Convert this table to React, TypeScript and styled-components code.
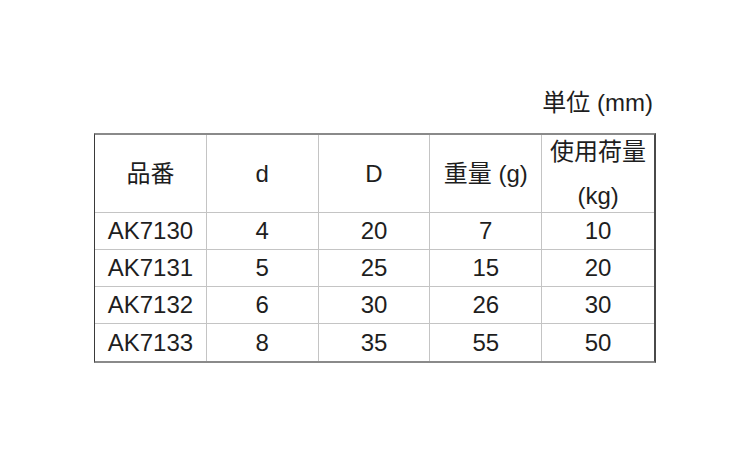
import React from 'react';
import styled, { createGlobalStyle } from 'styled-components';

const GlobalStyle = createGlobalStyle`
  html, body {
    margin: 0;
    padding: 0;
    background: #ffffff;
  }
  body {
    font-family: "Liberation Sans", Arial, "Noto Sans CJK JP", sans-serif;
    color: #1e1e1e;
  }
`;

const Page = styled.div`
  width: 750px;
  height: 450px;
  display: flex;
  flex-direction: column;
  align-items: center;
  padding-top: 89px;
  box-sizing: border-box;
`;

const Sheet = styled.div`
  width: 562px;
  display: flex;
  flex-direction: column;
`;

const Unit = styled.div`
  align-self: flex-end;
  font-size: 24px;
  line-height: 28px;
  padding-right: 3px;
  margin-bottom: 16px;
`;

const Grid = styled.div`
  display: grid;
  grid-template-columns: repeat(5, 1fr);
  grid-template-rows: 78px repeat(4, 37px);
  border-top: 2px solid #8a8a8a;
  border-bottom: 2px solid #8a8a8a;
  border-left: 1px solid #3a3a3a;
  border-right: 2px solid #4a4a4a;
`;

const Cell = styled.div<{ $last?: boolean; $bottom?: boolean }>`
  display: flex;
  flex-direction: column;
  align-items: center;
  justify-content: center;
  font-size: 24px;
  line-height: 28px;
  border-right: ${p => (p.$last ? 'none' : '1px solid #c4c4c4')};
  border-bottom: ${p => (p.$bottom ? 'none' : '1px solid #c4c4c4')};
  text-align: center;
  white-space: nowrap;
`;

const HeadCell = styled(Cell)`
  line-height: 44px;
  padding-top: 1px;
`;

const headers = ['品番', 'd', 'D', '重量 (g)'];

const rows = [
  ['AK7130', '4', '20', '7', '10'],
  ['AK7131', '5', '25', '15', '20'],
  ['AK7132', '6', '30', '26', '30'],
  ['AK7133', '8', '35', '55', '50'],
];

export default function App() {
  return (
    <>
      <GlobalStyle />
      <Page>
        <Sheet>
          <Unit>単位 (mm)</Unit>
          <Grid>
            {headers.map(h => (
              <HeadCell key={h}>{h}</HeadCell>
            ))}
            <HeadCell $last>
              <span>使用荷量</span>
              <span>(kg)</span>
            </HeadCell>
            {rows.map((r, ri) =>
              r.map((v, ci) => (
                <Cell
                  key={`${ri}-${ci}`}
                  $last={ci === r.length - 1}
                  $bottom={ri === rows.length - 1}
                >
                  {v}
                </Cell>
              ))
            )}
          </Grid>
        </Sheet>
      </Page>
    </>
  );
}
